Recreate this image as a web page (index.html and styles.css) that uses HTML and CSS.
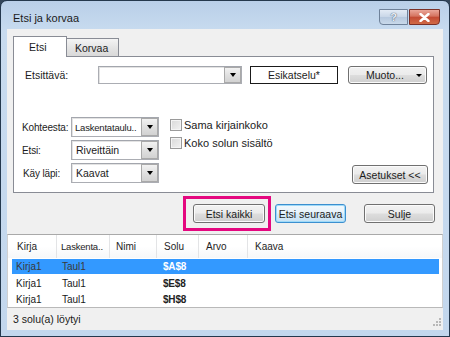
FILE: index.html
```html
<!DOCTYPE html>
<html lang="fi">
<head>
<meta charset="utf-8">
<title>Etsi ja korvaa</title>
<link rel="stylesheet" href="styles.css">
</head>
<body>
<div class="window">
  <div class="titlebar">
    <span class="title">Etsi ja korvaa</span>
    <div class="tbtns">
      <span class="tb help">?</span>
      <span class="tb close"><svg width="11" height="9" viewBox="0 0 11 9"><path d="M1.5 1 L9.5 8 M9.5 1 L1.5 8" stroke="#fff" stroke-width="2.4" stroke-linecap="round"/></svg></span>
    </div>
  </div>
  <div class="client">
    <div class="tabs">
      <div class="tabstrip">
        <div class="tab active">Etsi</div>
        <div class="tab">Korvaa</div>
      </div>
      <div class="panel">
        <div class="findrow">
          <span class="findlbl">Etsittävä:</span>
          <div class="combo wide"><span class="cval"></span><span class="drop"><i class="tri"></i></span></div>
          <div class="preview">Esikatselu*</div>
          <div class="btn muoto"><span>Muoto...</span><i class="tri small"></i></div>
        </div>
        <div class="options">
          <div class="selects">
            <span class="lbl">Kohteesta:</span>
            <div class="combo"><span class="cval narrow">Laskentataulu..</span><span class="drop"><i class="tri"></i></span></div>
            <span class="lbl">Etsi:</span>
            <div class="combo"><span class="cval">Riveittäin</span><span class="drop"><i class="tri"></i></span></div>
            <span class="lbl lbl3">Käy läpi:</span>
            <div class="combo"><span class="cval">Kaavat</span><span class="drop"><i class="tri"></i></span></div>
          </div>
          <div class="checks">
            <div class="chk"><span class="box"></span><span>Sama kirjainkoko</span></div>
            <div class="chk"><span class="box"></span><span>Koko solun sisältö</span></div>
          </div>
          <div class="btn asetukset">Asetukset &lt;&lt;</div>
        </div>
      </div>
    </div>
    <div class="actions">
      <div class="highlight"><div class="btn findall">Etsi kaikki</div></div>
      <div class="btn findnext">Etsi seuraava</div>
      <div class="btn closebtn">Sulje</div>
    </div>
    <div class="results">
      <div class="head">
        <span class="h c1">Kirja</span>
        <span class="h c2">Laskenta..</span>
        <span class="h c3">Nimi</span>
        <span class="h c4">Solu</span>
        <span class="h c5">Arvo</span>
        <span class="h c6">Kaava</span>
      </div>
      <div class="row sel">
        <span class="c1">Kirja1</span><span class="c2">Taul1</span><span class="c3"></span><span class="c4 cell">$A$8</span><span class="c5"></span><span class="c6"></span>
      </div>
      <div class="row">
        <span class="c1">Kirja1</span><span class="c2">Taul1</span><span class="c3"></span><span class="c4 cell">$E$8</span><span class="c5"></span><span class="c6"></span>
      </div>
      <div class="row">
        <span class="c1">Kirja1</span><span class="c2">Taul1</span><span class="c3"></span><span class="c4 cell">$H$8</span><span class="c5"></span><span class="c6"></span>
      </div>
    </div>
    <div class="status">
      <span>3 solu(a) löytyi</span>
      <svg class="grip" width="10" height="10" viewBox="0 0 10 10">
        <g fill="#b8b8b8">
          <rect x="8" y="0" width="2" height="2"/>
          <rect x="5" y="3" width="2" height="2"/><rect x="8" y="3" width="2" height="2"/>
          <rect x="2" y="6" width="2" height="2"/><rect x="5" y="6" width="2" height="2"/><rect x="8" y="6" width="2" height="2"/>
        </g>
      </svg>
    </div>
  </div>
</div>
</body>
</html>
```

FILE: styles.css
```css
* { box-sizing: border-box; margin: 0; padding: 0; }
html, body { width: 450px; height: 337px; overflow: hidden; }
body {
  background: #33465a;
  font-family: "Liberation Sans", Arial, sans-serif;
  font-size: 10.5px;
  color: #1c1c1c;
}
.window {
  width: 450px;
  height: 337px;
  border: 1px solid #24384d;
  border-radius: 7px 7px 0 0;
  background: linear-gradient(#b9cfe8, #c8dbef 30px, #c3d7ed);
  padding: 0 6px 6px 6px;
  display: flex;
  flex-direction: column;
}
.titlebar {
  height: 28px;
  display: flex;
  justify-content: space-between;
  align-items: flex-start;
  flex: none;
}
.title {
  margin: 11px 0 0 6px;
  font-size: 11px;
  line-height: 13px;
  color: #1b1b1b;
}
.tbtns {
  display: flex;
  margin: 8px 3px 0 0;
}
.tb {
  height: 16px;
  display: flex;
  align-items: center;
  justify-content: center;
  border: 1px solid #6f829a;
}
.help {
  width: 29px;
  border-radius: 0 0 0 4px;
  background: linear-gradient(#e3ebf5, #c8d6e7 50%, #b6c8de 51%, #c9d9ea);
  color: #e9eef5;
  font-weight: bold;
  font-size: 11px;
  text-shadow: 0 0 1px #55657a, 0 0 1px #55657a;
  margin-right: 1px;
}
.close {
  width: 31px;
  border-color: #7b3026;
  border-radius: 0 0 4px 0;
  background: linear-gradient(#eaa699, #d4735f 45%, #c34a34 50%, #d06a45);
}
.client {
  flex: 1;
  background: #f0f0f0;
  display: flex;
  flex-direction: column;
}
.tabs {
  margin: 7px 9px 0 6px;
}
.tabstrip {
  display: flex;
  align-items: flex-end;
  height: 20px;
}
.tab {
  height: 18px;
  width: 52px;
  padding-left: 8px;
  line-height: 19px;
  border: 1px solid #898c95;
  border-bottom: none;
  border-left: none;
  background: linear-gradient(#f4f4f4, #e2e2e2 60%, #d9d9d9);
}
.tab.active {
  height: 21px;
  width: 54px;
  padding-left: 15px;
  line-height: 21px;
  border-left: 1px solid #898c95;
  background: #fff;
  margin-bottom: -1px;
  position: relative;
  z-index: 1;
}
.panel {
  height: 137px;
  border: 1px solid #898c95;
  background: #fff;
  padding-top: 9px;
  display: flex;
  flex-direction: column;
}
.findrow {
  display: flex;
  align-items: center;
  height: 18px;
}
.findlbl {
  width: 84px;
  padding-left: 11px;
}
.combo {
  height: 20px;
  border: 1px solid #abadb3;
  border-top-color: #a3a6ad;
  background: #fff;
  display: flex;
  align-items: stretch;
  box-shadow: inset 1px 1px 0 #e3e3e3;
}
.combo.wide {
  width: 144px;
  height: 18px;
}
.cval {
  flex: 1;
  padding-left: 4px;
  display: flex;
  align-items: center;
  white-space: nowrap;
  overflow: hidden;
}
.cval.narrow {
  font-size: 9.5px;
  letter-spacing: -0.2px;
  padding-left: 3px;
}
.drop {
  width: 17px;
  border: 1px solid #a9a9a9;
  background: linear-gradient(#f2f2f2, #e0e0e0 50%, #d2d2d2);
  display: flex;
  align-items: center;
  justify-content: center;
}
.tri {
  display: block;
  width: 0;
  height: 0;
  border-left: 3.5px solid transparent;
  border-right: 3.5px solid transparent;
  border-top: 4px solid #000;
}
.tri.small {
  border-left-width: 3px;
  border-right-width: 3px;
  border-top-width: 3px;
}
.preview {
  margin-left: 8px;
  width: 88px;
  height: 18px;
  border: 1px solid #1a1a1a;
  display: flex;
  align-items: center;
  justify-content: center;
  background: #fff;
  font-size: 10.5px;
}
.btn {
  height: 19px;
  border: 1px solid #707070;
  border-radius: 3px;
  background: linear-gradient(#f2f2f2, #ebebeb 48%, #dddddd 52%, #cfcfcf);
  box-shadow: inset 0 0 0 1px #fbfbfb;
  display: flex;
  align-items: center;
  justify-content: center;
  white-space: nowrap;
}
.muoto {
  margin-left: 10px;
  width: 79px;
  height: 18px;
  padding: 0 4px 0 17px;
  justify-content: space-between;
}
.options {
  margin-top: 33px;
  display: flex;
  padding-left: 8px;
  padding-right: 5px;
}
.selects {
  display: grid;
  grid-template-columns: 49px 88px;
  grid-auto-rows: 20px;
  row-gap: 3px;
  align-items: center;
}
.lbl {
  font-size: 10px;
  letter-spacing: -0.15px;
}
.lbl3 { padding-left: 1px; }
.checks {
  margin-left: 11px;
  margin-top: -1px;
  display: flex;
  flex-direction: column;
}
.chk {
  height: 18px;
  display: flex;
  align-items: center;
  font-size: 11px;
}
.box {
  width: 12px;
  height: 12px;
  border: 1px solid #9a9a9a;
  background: linear-gradient(135deg, #d8d8d8, #f2f2f2);
  box-shadow: inset 0 0 0 1px #f4f4f4;
  margin-right: 2px;
}
.asetukset {
  margin-left: auto;
  align-self: flex-end;
  width: 76px;
  margin-bottom: -1px;
}
.actions {
  margin-top: 3px;
  display: flex;
  justify-content: flex-end;
  align-items: center;
  padding-right: 8px;
  height: 35px;
}
.highlight {
  border: 3px solid #e4087f;
  padding: 5px 3px 5px 7px;
  margin-right: 4px;
}
.findall { width: 72px; }
.findnext {
  width: 71px;
  margin-right: 18px;
  border-color: #3c8fcf;
  box-shadow: inset 0 0 0 1px #9fdaf8;
  background: linear-gradient(#f3f9fd, #e6f2fa 48%, #d6eaf7 52%, #c8e2f4);
}
.closebtn { width: 71px; }
.results {
  margin-top: 3px;
  height: 74px;
  background: #fff;
  border-top: 1px solid #a9a9a9;
  border-bottom: 1px solid #b9b9b9;
  border-left: 1px solid #d0d0d0;
  border-right: 1px solid #d0d0d0;
  font-size: 10px;
}
.head {
  height: 23px;
  display: grid;
  grid-template-columns: 49px 53px 47px 42px 49px 1fr;
  background: linear-gradient(#ffffff, #ffffff 50%, #f6f7f9);
}
.h {
  display: flex;
  align-items: center;
  border-right: 1px solid #e3e4e6;
  padding-left: 7px;
  color: #1e1e1e;
}
.h.c1 { padding-left: 9px; }
.h.c2 { padding-left: 4px; font-size: 9.5px; letter-spacing: -0.2px; }
.h.c3 { padding-left: 6px; }
.h.c6 { border-right: none; }
.row {
  height: 16px;
  margin: 0 3px 0 4px;
  display: grid;
  grid-template-columns: 44px 53px 47px 42px 49px 1fr;
  align-items: center;
  color: #1a1a1a;
}
.head + .row { margin-top: 1px; }
.row .c1 { padding-left: 4px; }
.row .c2 { padding-left: 6px; }
.row .c4 { padding-left: 7px; }
.cell {
  font-weight: bold;
  color: #222;
  letter-spacing: -0.2px;
}
.row.sel {
  background: #3399ff;
  height: 15px;
  margin-bottom: 1px;
  color: #3a3a3a;
}
.row.sel .cell { color: #fff; }
.status {
  flex: 1;
  display: flex;
  align-items: center;
  justify-content: space-between;
  padding: 0 2px 0 6px;
  font-size: 10.5px;
  color: #1a1a1a;
  position: relative;
}
.grip {
  align-self: flex-end;
  margin-bottom: 2px;
}
```
